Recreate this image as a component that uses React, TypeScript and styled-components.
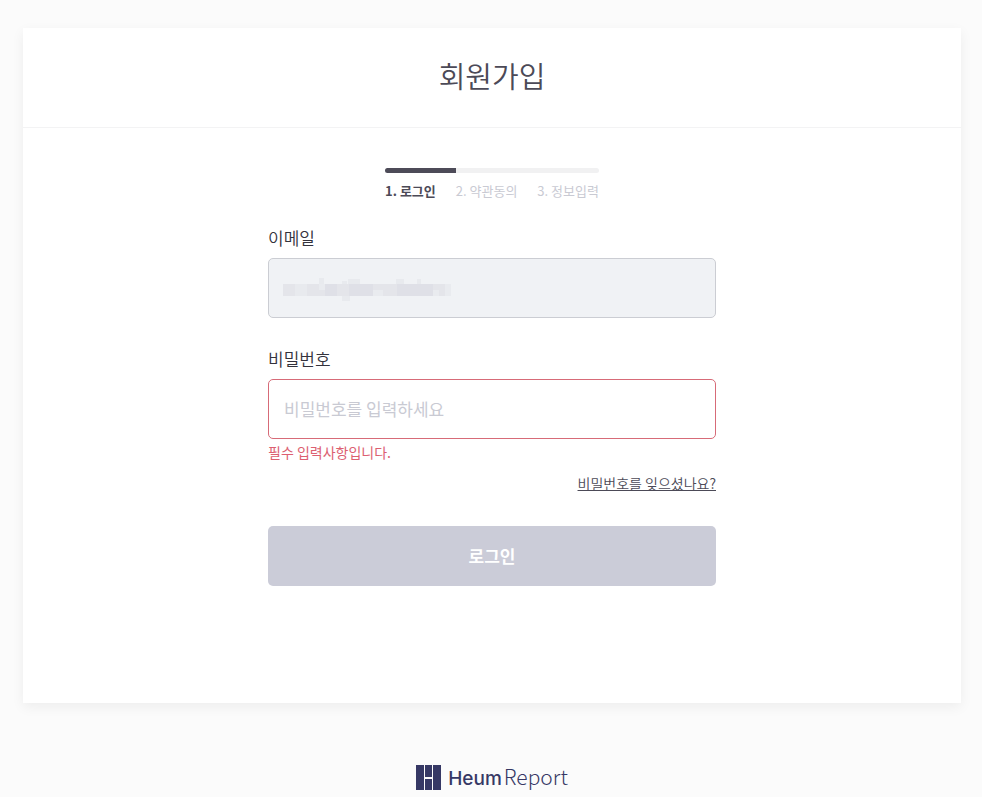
import React from "react";
import styled, { createGlobalStyle } from "styled-components";

const GlobalStyle = createGlobalStyle`
  *, *::before, *::after { box-sizing: border-box; }
  body {
    margin: 0;
    background: #fbfbfb;
    color: #4c4a57;
    font-family: "Noto Sans CJK KR", "Noto Sans", sans-serif;
  }
`;

const Page = styled.div`
  display: flex;
  flex-direction: column;
  padding: 28px 21px 6px 23px;
`;

const Card = styled.main`
  background: #fff;
  box-shadow: 0 4px 12px rgba(0, 0, 0, 0.06);
  padding-bottom: 117px;
`;

const CardHeader = styled.header`
  padding: 26px 16px 30px;
  border-bottom: 1px solid #f3f3f4;
  text-align: center;
`;

const Title = styled.h1`
  margin: 0;
  font-size: 29px;
  line-height: 43px;
  font-weight: 350;
`;

const Steps = styled.nav`
  width: fit-content;
  margin: 40px auto 0;
`;

const Track = styled.div`
  height: 5px;
  border-radius: 3px;
  background: #f1f1f2;
  overflow: hidden;
`;

const Progress = styled.div`
  width: 33%;
  height: 100%;
  background: #4d4b58;
`;

const StepList = styled.ol`
  display: flex;
  gap: 20px;
  margin: 8px 0 0;
  padding: 0;
  list-style: none;
`;

const Step = styled.li<{ $active?: boolean }>`
  font-size: 13px;
  line-height: 20px;
  font-weight: ${(p) => (p.$active ? 700 : 400)};
  color: ${(p) => (p.$active ? "#4c4a57" : "#c9cad3")};
`;

const Form = styled.form`
  display: flex;
  flex-direction: column;
  max-width: 448px;
  margin: 24px auto 0;
`;

const Field = styled.div`
  display: flex;
  flex-direction: column;
  position: relative;

  & + & {
    margin-top: 28px;
  }
`;

const Label = styled.label`
  margin-bottom: 8px;
  font-size: 17px;
  line-height: 25px;
  font-weight: 350;
  color: #33323c;
`;

const Input = styled.input<{ $invalid?: boolean }>`
  width: 100%;
  height: 60px;
  padding: 0 15px 2px;
  border: 1px solid ${(p) => (p.$invalid ? "#d76b78" : "#cbcdd3")};
  border-radius: 5px;
  background: #fff;
  color: #4c4a57;
  font: inherit;
  font-size: 17px;
  outline: none;
  &::placeholder { color: #c9cad3; opacity: 1; }
  &:disabled { background: #f0f2f5; }
`;

const HiddenValue = styled.svg`
  position: absolute;
  left: 14px;
  bottom: 14px;
`;

const ErrorText = styled.p`
  margin: 2px 0 0;
  font-size: 14px;
  line-height: 22px;
  color: #dc6071;
`;

const ForgotLink = styled.a`
  align-self: flex-end;
  margin-top: 8px;
  font-size: 14px;
  line-height: 24px;
  font-weight: 350;
  color: #4c4a57;
  text-decoration: underline;
`;

const Submit = styled.button`
  height: 60px;
  margin-top: 31px;
  padding: 0 16px 2px;
  border: 0;
  border-radius: 5px;
  background: #cbccd8;
  color: #fff;
  font: inherit;
  font-size: 17px;
  font-weight: 700;
`;

const Footer = styled.footer`
  display: flex;
  justify-content: center;
  align-items: center;
  gap: 7px;
  margin-top: 59px;
  color: #363865;
`;

const Wordmark = styled.span`
  display: flex;
  align-items: baseline;
  gap: 2px;
  line-height: 28px;
`;

const Heum = styled.span`
  font-family: Inter, sans-serif;
  font-size: 19px;
  font-weight: 500;
`;

const Report = styled.span`
  font-size: 21px;
  font-weight: 300;
`;

export default function App() {
  return (
    <>
      <GlobalStyle />
      <Page>
        <Card>
          <CardHeader>
            <Title>회원가입</Title>
          </CardHeader>
          <Steps>
            <Track>
              <Progress />
            </Track>
            <StepList>
              <Step $active>1. 로그인</Step>
              <Step>2. 약관동의</Step>
              <Step>3. 정보입력</Step>
            </StepList>
          </Steps>
          <Form noValidate>
            <Field>
              <Label htmlFor="email">이메일</Label>
              <Input id="email" type="email" disabled />
              <HiddenValue width="180" height="32" viewBox="0 0 180 32" aria-hidden="true">
                <path d="M1 12h168v12H1z" fill="#e4e5ea" />
                <path d="M13 12h12v12H13zM37 6h5v6h-5zM60 9h5v3h-5zM66 7h12v5H66zM60 24h8v5h-8zM114 7h8v5h-8zM135 7h4v5h-4z" fill="#e8eaee" />
                <path d="M43 12h12v12H43zM67 12h24v12H67zM115 12h36v12h-36z" fill="#dfe0e7" />
                <path d="M37 12h6v6h-6zM91 18h10v6H91zM151 18h6v6h-6zM163 12h6v12h-6z" fill="#e9ebef" />
              </HiddenValue>
            </Field>
            <Field>
              <Label htmlFor="password">비밀번호</Label>
              <Input
                id="password"
                type="password"
                placeholder="비밀번호를 입력하세요"
                aria-invalid="true"
                aria-describedby="password-error"
                $invalid
              />
              <ErrorText id="password-error">필수 입력사항입니다.</ErrorText>
            </Field>
            <ForgotLink href="#forgot">비밀번호를 잊으셨나요?</ForgotLink>
            <Submit type="button">로그인</Submit>
          </Form>
        </Card>
        <Footer>
          <svg width="25" height="25" viewBox="0 0 25 25" aria-hidden="true">
            <path d="M0 0h8v25H0zM9 0h7v12H9zM9 14h7v11H9zM17 0h8v25h-8z" fill="#363865" />
          </svg>
          <Wordmark>
            <Heum>Heum</Heum>
            <Report>Report</Report>
          </Wordmark>
        </Footer>
      </Page>
    </>
  );
}
